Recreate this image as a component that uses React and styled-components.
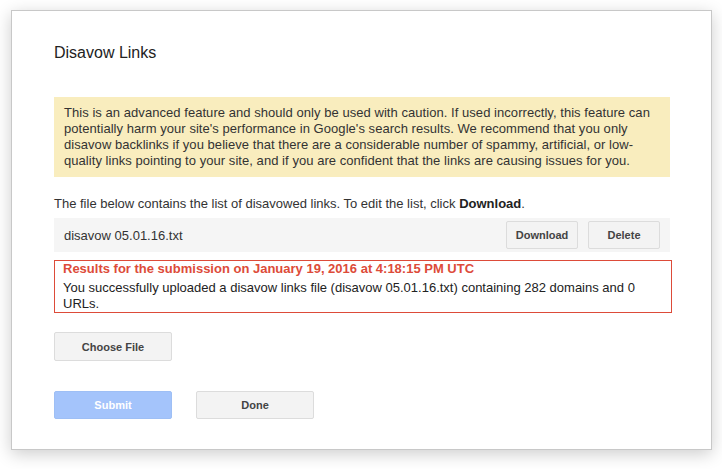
import React from "react";
import styled, { createGlobalStyle } from "styled-components";

const GlobalStyle = createGlobalStyle`
  html, body {
    margin: 0;
    padding: 0;
    background: #fff;
  }
  body {
    font-family: "Liberation Sans", Arial, sans-serif;
    color: #333;
  }
`;

const Page = styled.div`
  min-height: 469px;
  box-sizing: border-box;
  padding: 10px 0 19px 11px;
`;

const Dialog = styled.div`
  box-sizing: border-box;
  width: 701px;
  height: 440px;
  background: #fff;
  border: 1px solid #c8c8c8;
  box-shadow: 0 4px 16px rgba(0, 0, 0, 0.2);
  padding: 32px 41px 30px 42px;
`;

const Title = styled.h1`
  margin: 0;
  font-size: 16px;
  line-height: 20px;
  font-weight: normal;
  color: #222;
`;

const Warning = styled.div`
  margin-top: 34px;
  box-sizing: border-box;
  height: 80px;
  padding: 8px 10px;
  background: #f9edbe;
  font-size: 13px;
  line-height: 16px;
  letter-spacing: 0.05px;
  color: #333;
`;

const Intro = styled.p`
  margin: 19px 0 0;
  font-size: 13px;
  line-height: 16px;
  color: #333;
  b {
    color: #222;
  }
`;

const FileRow = styled.div`
  margin-top: 6px;
  height: 34px;
  display: flex;
  align-items: center;
  padding: 0 10px;
  background: #f5f5f5;
  font-size: 13px;
  color: #333;
`;

const FileName = styled.span`
  flex: 1;
`;

const Button = styled.button`
  box-sizing: border-box;
  width: ${(p) => p.$width || 118}px;
  height: ${(p) => p.$height || 29}px;
  margin-left: ${(p) => p.$gap || 0}px;
  padding: 0;
  border-radius: 2px;
  border: 1px solid ${(p) => (p.$primary ? "#9ebff5" : "#dcdcdc")};
  background: ${(p) => (p.$primary ? "#a4c4fb" : "#f3f3f3")};
  color: ${(p) => (p.$primary ? "#fff" : "#444")};
  font-family: "Liberation Sans", Arial, sans-serif;
  font-size: 11px;
  font-weight: bold;
  cursor: pointer;
`;

const Result = styled.div`
  margin-top: 8px;
  width: 618px;
  box-sizing: border-box;
  border: 1px solid #dd4b39;
  padding: 0 8px;
  font-size: 13px;
`;

const ResultTitle = styled.div`
  color: #dd4b39;
  font-weight: bold;
  line-height: 15px;
`;

const ResultText = styled.div`
  margin-top: 4px;
  line-height: 16px;
  color: #222;
`;

const Row = styled.div`
  display: flex;
  margin-top: ${(p) => p.$top}px;
`;

export default function App() {
  return (
    <Page>
      <GlobalStyle />
      <Dialog>
        <Title>Disavow Links</Title>
        <Warning>
          This is an advanced feature and should only be used with caution. If used
          incorrectly, this feature can potentially harm your site's performance in
          Google's search results. We recommend that you only disavow backlinks if you
          believe that there are a considerable number of spammy, artificial, or
          low-quality links pointing to your site, and if you are confident that the
          links are causing issues for you.
        </Warning>
        <Intro>
          The file below contains the list of disavowed links. To edit the list, click{" "}
          <b>Download</b>.
        </Intro>
        <FileRow>
          <FileName>disavow 05.01.16.txt</FileName>
          <Button $width={72} $height={28}>Download</Button>
          <Button $width={72} $height={28} $gap={10}>Delete</Button>
        </FileRow>
        <Result>
          <ResultTitle>
            Results for the submission on January 19, 2016 at 4:18:15 PM UTC
          </ResultTitle>
          <ResultText>
            You successfully uploaded a disavow links file (disavow 05.01.16.txt)
            containing 282 domains and 0 URLs.
          </ResultText>
        </Result>
        <Row $top={19}>
          <Button>Choose File</Button>
        </Row>
        <Row $top={30}>
          <Button $primary $height={28}>Submit</Button>
          <Button $height={28} $gap={24}>Done</Button>
        </Row>
      </Dialog>
    </Page>
  );
}
